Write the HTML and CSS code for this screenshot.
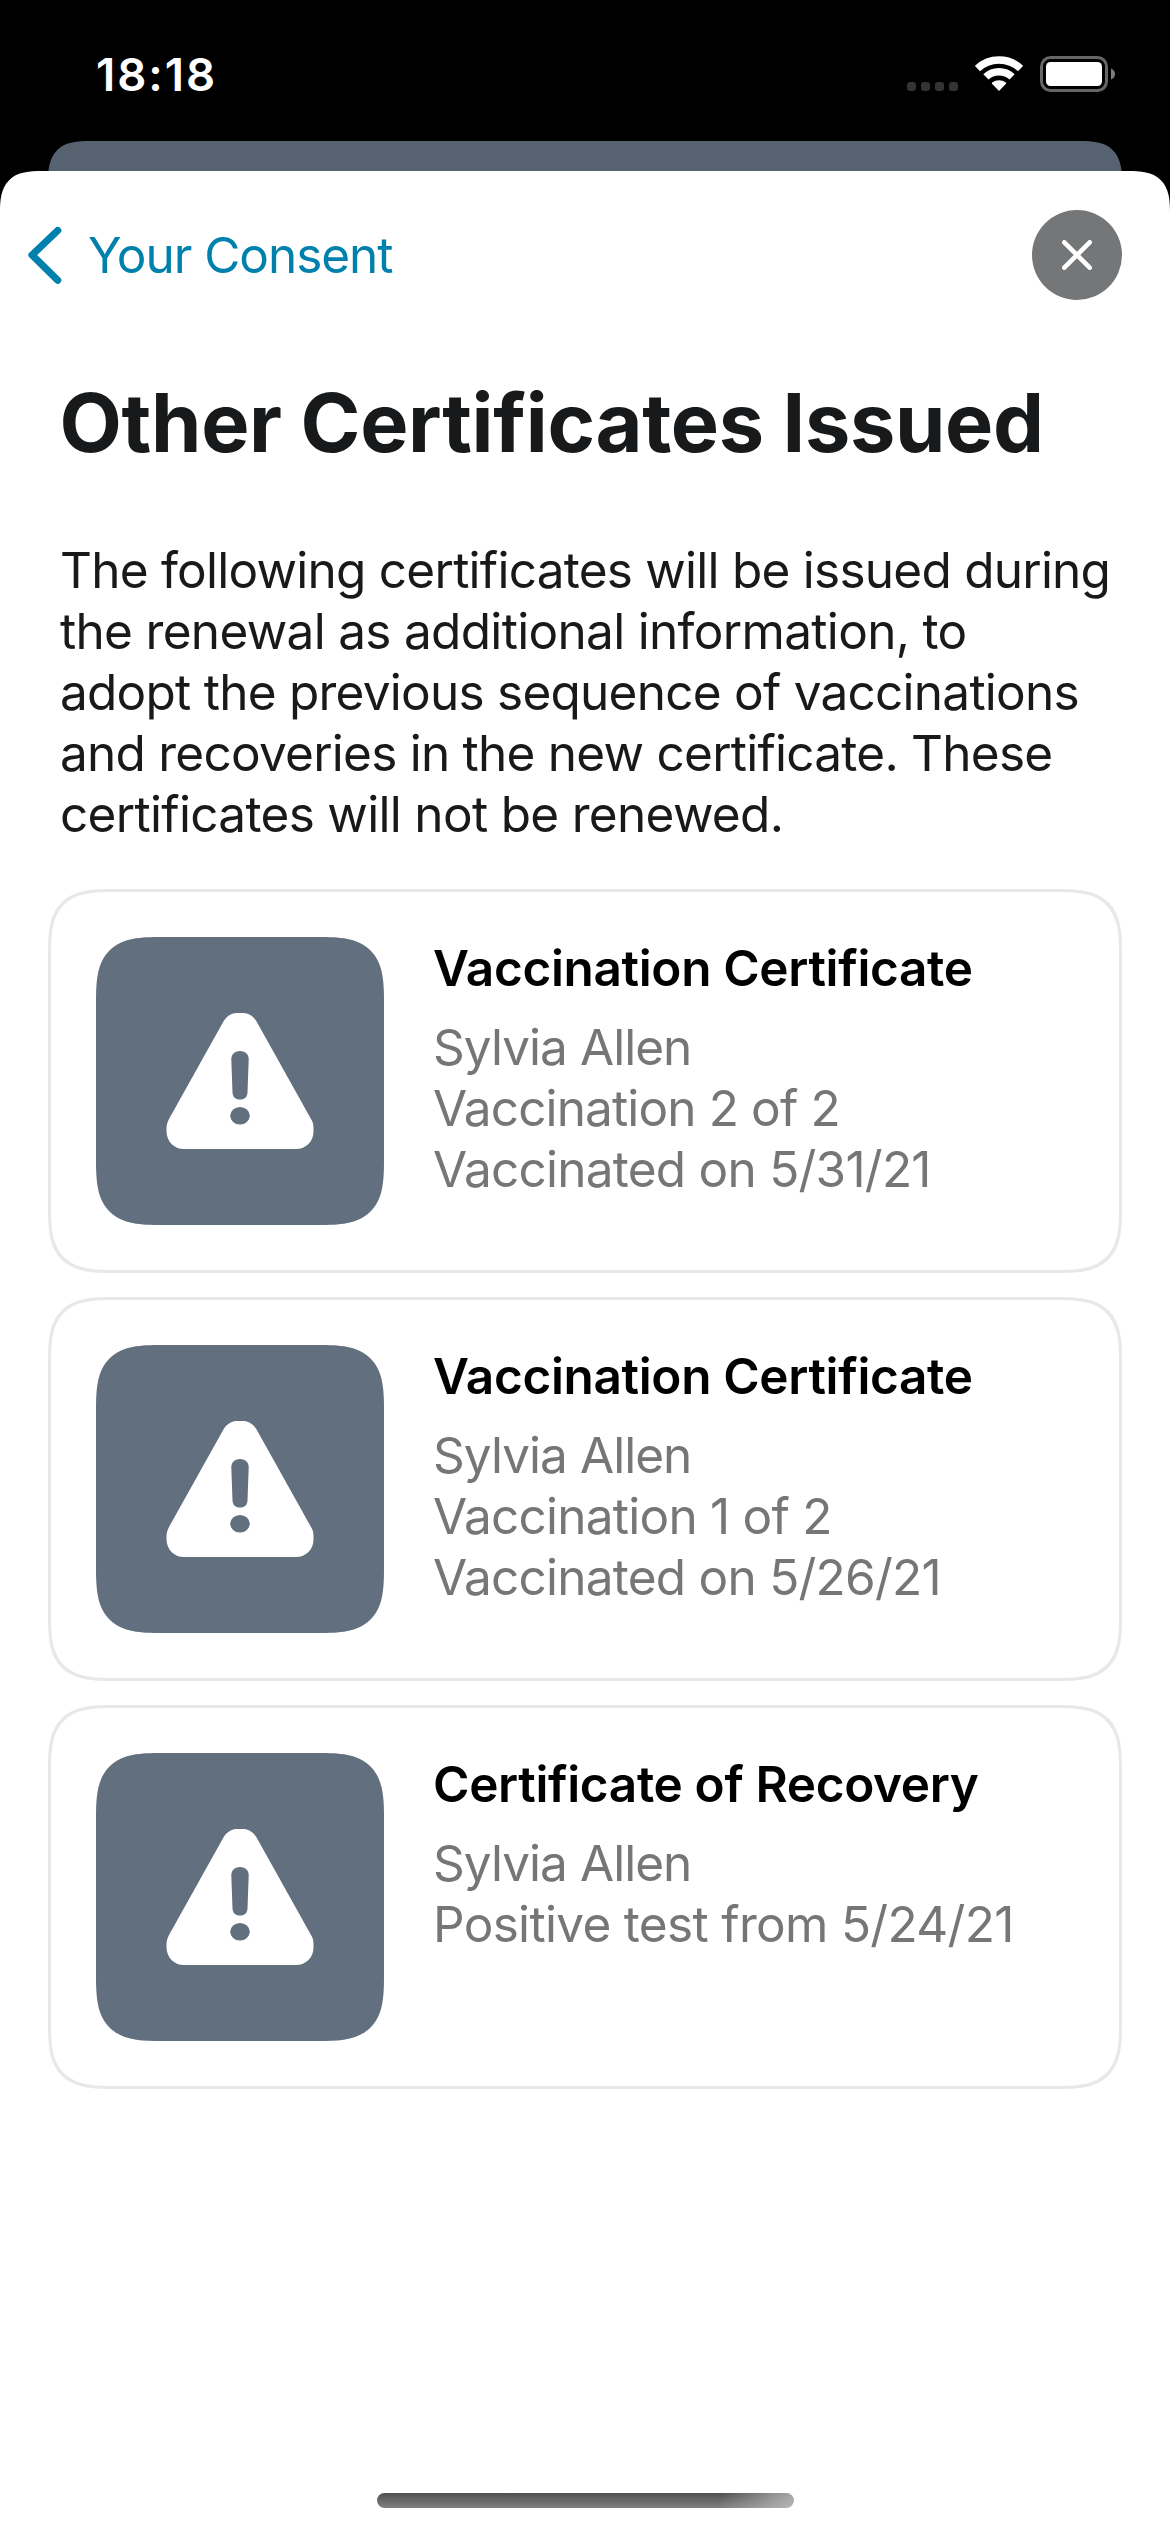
FILE: index.html
```html
<!DOCTYPE html>
<html lang="en">
<head>
<meta charset="utf-8">
<title>Other Certificates Issued</title>
<link rel="stylesheet" href="styles.css">
</head>
<body>
<svg class="defs" width="0" height="0" aria-hidden="true">
  <symbol id="warning" viewBox="0 0 148 136">
    <path fill="#fff" d="M58 7.500C61.500 2.500 66 0 71 0h6c5 0 9.500 2.500 13 7.500L145 106c2 3 2.500 6 2.500 9v3.500c0 10-7.500 17.500-17.500 17.500H18C8 136 .500 128.500.500 118v-3c0-3 1-6 2.500-9Z"/>
    <path fill="#626f7f" d="M74 38c5.300 0 8.800 3.500 8.700 8.500l-1.200 33c-.2 4.500-3 7-7.500 7s-7.300-2.500-7.500-7l-1.200-33C65.200 41.500 68.700 38 74 38Z"/>
    <ellipse fill="#626f7f" cx="74" cy="102.800" rx="9.800" ry="8.800"/>
  </symbol>
</svg>
<header class="status">
  <span class="time">18:18</span>
  <div class="indicators">
    <div class="dots"><i></i><i></i><i></i><i></i></div>
    <svg class="wifi" width="48" height="36" viewBox="0 0 48 36" fill="none">
      <path stroke="#fff" stroke-width="7.500" d="M2.400 13.600A31.500 31.500 0 0 1 45.600 13.600"/>
      <path stroke="#fff" stroke-width="7.500" d="M10.900 21.900A19 19 0 0 1 37.100 21.900"/>
      <path fill="#fff" d="M24 36 17 28.700q-.5-.6.200-1.100a11.500 11.500 0 0 1 13.600 0q.7.500.2 1.100Z"/>
    </svg>
    <svg class="battery" width="75" height="36" viewBox="0 0 75 36">
      <rect x="1.500" y="1.500" width="65" height="33" rx="9" fill="none" stroke="#666" stroke-width="3"/>
      <rect x="6" y="6" width="56" height="24" rx="4.500" fill="#fff"/>
      <path fill="#7c7c7c" d="M71 12.500q4 1.500 4 5.500t-4 5.500Z"/>
    </svg>
  </div>
</header>
<div class="behind"></div>
<main class="sheet">
  <nav class="nav">
    <a class="back">
      <svg width="34" height="57" viewBox="0 0 34 57"><path d="M29.700 3.500 4 28l25.700 25.200" fill="none" stroke="#0080ad" stroke-width="7.200" stroke-linecap="round" stroke-linejoin="round"/></svg>
      <span>Your Consent</span>
    </a>
    <button class="close" aria-label="Close">
      <svg width="30" height="30" viewBox="0 0 30 30"><path d="m2.300 2.300 25.400 25.400m0-25.400L2.300 27.700" stroke="#fff" stroke-width="4.600" stroke-linecap="round"/></svg>
    </button>
  </nav>
  <h1 class="title">Other Certificates Issued</h1>
  <p class="intro">The following certificates will be issued during<br><span class="loose">the renewal as additional information, to</span><br>adopt the previous sequence of vaccinations<br>and recoveries in the new certificate. These<br><span class="loose">certificates will not be renewed.</span></p>
  <section class="cards">
    <article class="card">
      <div class="tile"><svg width="148" height="136"><use href="#warning"/></svg></div>
      <div class="info">
        <h2>Vaccination Certificate</h2>
        <p class="name">Sylvia Allen</p>
        <p class="dose">Vaccination 2 of 2</p>
        <p>Vaccinated on 5/31/21</p>
      </div>
    </article>
    <article class="card">
      <div class="tile"><svg width="148" height="136"><use href="#warning"/></svg></div>
      <div class="info">
        <h2>Vaccination Certificate</h2>
        <p class="name">Sylvia Allen</p>
        <p>Vaccination 1 of 2</p>
        <p>Vaccinated on 5/26/21</p>
      </div>
    </article>
    <article class="card">
      <div class="tile"><svg width="148" height="136"><use href="#warning"/></svg></div>
      <div class="info">
        <h2>Certificate of Recovery</h2>
        <p class="name">Sylvia Allen</p>
        <p class="loose">Positive test from 5/24/21</p>
      </div>
    </article>
  </section>
  <div class="home"></div>
</main>
</body>
</html>
```
FILE: styles.css
```css
* { box-sizing: border-box; }
body {
  margin: 0;
  width: 1170px;
  height: 2532px;
  display: flex;
  flex-direction: column;
  overflow: hidden;
  background: #000;
  font-family: Inter, "Liberation Sans", sans-serif;
  font-size: 49.5px;
  line-height: 61px;
}
h1, h2, p { margin: 0; }
.defs { display: none; }
.status {
  height: 141px;
  padding: 44px 55px 0 96px;
  display: flex;
  justify-content: space-between;
  align-items: flex-start;
  color: #fff;
}
.time { font-size: 45.5px; font-weight: 600; line-height: 61px; letter-spacing: 2px; }
.indicators { display: flex; align-items: flex-start; padding-top: 11px; }
.dots { display: flex; gap: 5px; margin: 27px 17px 0 0; }
.dots i { width: 9px; height: 9px; border-radius: 3px; background: #333; }
.battery { margin: 1px 0 0 17px; }
.behind {
  height: 60px;
  margin: 0 48px -30px;
  border-radius: 30px 30px 0 0;
  background: #566270;
}
.sheet {
  flex: 1;
  display: flex;
  flex-direction: column;
  position: relative;
  border-radius: 30px 30px 0 0;
  background: #fff;
}
.nav {
  display: flex;
  justify-content: space-between;
  align-items: center;
  padding: 39px 48px 0 28px;
}
.back {
  display: flex;
  align-items: center;
  gap: 26px;
  color: #0080ad;
  letter-spacing: -1.03px;
}
.close {
  display: flex;
  align-items: center;
  justify-content: center;
  width: 90px;
  height: 90px;
  padding: 0;
  border: 0;
  border-radius: 50%;
  background: #757678;
}
.title {
  margin: 73px 0 0 59.5px;
  font-size: 81px;
  font-weight: 700;
  line-height: 100px;
  letter-spacing: -0.34px;
  color: #17191a;
  white-space: nowrap;
}
.intro {
  margin: 67px 0 0 60px;
  color: #17191a;
  letter-spacing: -0.75px;
  white-space: nowrap;
}
.cards {
  display: flex;
  flex-direction: column;
  gap: 24px;
  margin: 44px 48px 0;
}
.card {
  display: flex;
  gap: 49px;
  height: 384px;
  padding: 45px;
  border: 3px solid #e8e8e8;
  border-radius: 45px;
}
.tile {
  display: flex;
  align-items: center;
  justify-content: center;
  width: 288px;
  height: 288px;
  border-radius: 45px;
  background: #626f7f;
}
.info {
  padding-top: 1px;
  color: #757678;
  letter-spacing: -0.75px;
  white-space: nowrap;
}
.info h2 {
  margin-bottom: 18px;
  font-size: 49.5px;
  font-weight: 600;
  letter-spacing: -0.34px;
  color: #000;
}
.info .name { letter-spacing: -0.95px; }
.info .dose { letter-spacing: -0.86px; }
.loose { letter-spacing: -0.68px; }
.home {
  width: 417px;
  height: 15px;
  margin: auto auto 24px 377px;
  border-radius: 7.5px;
  background:
    linear-gradient(100deg, transparent 82%, rgba(200, 200, 200, .75) 100%),
    linear-gradient(#505050, #808080);
}
@supports (corner-shape: superellipse(1.6)) {
  .card, .tile { border-radius: 66px; corner-shape: superellipse(1.6); }
  .behind, .sheet { border-radius: 42px 42px 0 0; corner-shape: superellipse(1.5); }
}
```
